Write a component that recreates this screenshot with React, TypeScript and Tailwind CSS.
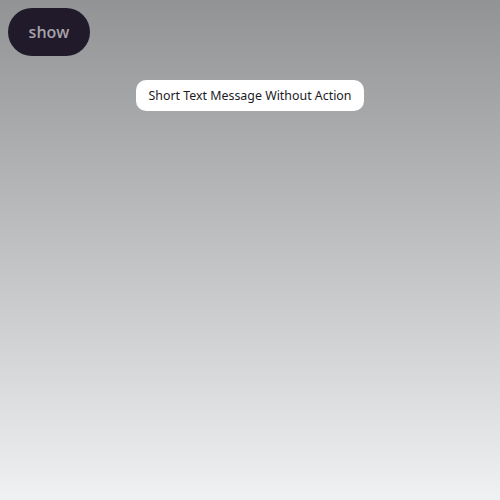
export default function App() {
    return (
        <div className="relative h-[500px] w-[500px] bg-gradient-to-b from-[#929395] to-[#f0f1f3]">
            <div className="p-2">
                <button className="h-12 w-[82px] rounded-full bg-[#201a2b] text-base font-semibold text-[#a6a2aa] font-['Open_Sans',sans-serif]">
                    show
                </button>
            </div>
            <div className="mt-4 flex justify-center">
                <div className="rounded-[10px] bg-white px-3 py-[6px] text-[12.4px] text-[#1c1b1f] font-['Noto_Sans',sans-serif] leading-[19px]">
                    Short Text Message Without Action
                </div>
            </div>
        </div>
    );
}
